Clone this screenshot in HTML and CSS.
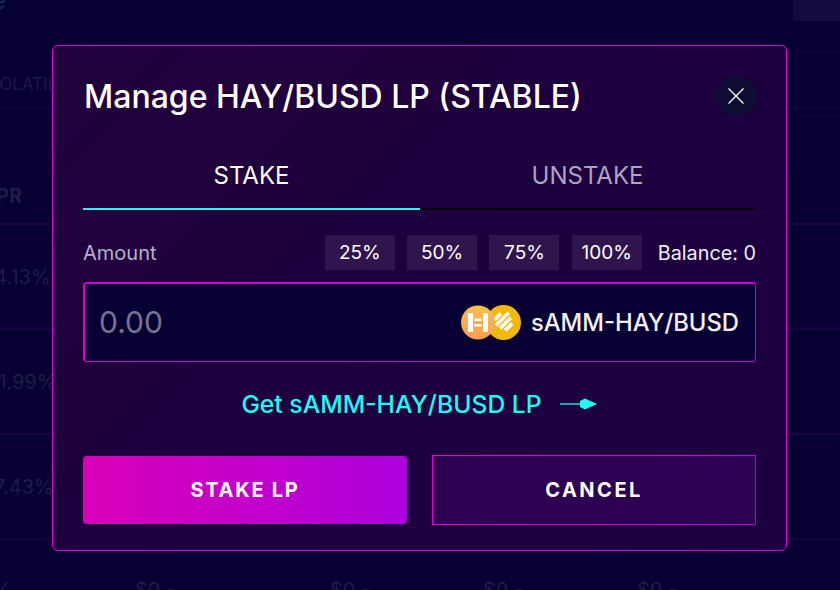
FILE: index.html
```html
<!DOCTYPE html>
<html lang="en">
<head>
<meta charset="utf-8">
<title>Manage HAY/BUSD LP</title>
<link rel="stylesheet" href="styles.css">
</head>
<body>
<div class="page">
  <header class="top"><span class="brand">e</span><span class="top-btn"></span></header>
  <div class="filters"><span class="filter-label">VOLATILE</span><span class="filter-box"></span></div>
  <div class="thead"><span class="th">APR</span></div>
  <div class="row"><span class="apr">14.13%</span></div>
  <div class="row"><span class="apr">21.99%</span></div>
  <div class="row"><span class="apr">17.43%</span></div>
  <div class="last"><span class="cell first-cell">%</span><span class="cell">$0 -</span><span class="cell">$0 -</span><span class="cell second">$0 -</span><span class="cell">$0 -</span></div>
</div>

<section class="modal">
  <div class="modal-head">
    <h2 class="title">Manage HAY/BUSD LP (STABLE)</h2>
    <button class="close" aria-label="Close">
      <svg width="16" height="16" viewBox="0 0 16 16"><path d="M0.5 0.5L15.5 15.5M15.5 0.5L0.5 15.5" stroke="#fff" stroke-width="1.3" fill="none"/></svg>
    </button>
  </div>
  <div class="tabs">
    <div class="tab active">STAKE</div>
    <div class="tab">UNSTAKE</div>
  </div>
  <div class="amount-row">
    <span class="amount-label">Amount</span>
    <div class="amount-tools">
      <span class="pct">25%</span>
      <span class="pct">50%</span>
      <span class="pct">75%</span>
      <span class="pct">100%</span>
      <span class="balance">Balance: 0</span>
    </div>
  </div>
  <div class="input-box">
    <span class="placeholder">0.00</span>
    <div class="token">
      <svg class="pair" width="60" height="35" viewBox="0 0 60 35">
        <defs>
          <linearGradient id="hay" x1="0" y1="0" x2="0" y2="1"><stop offset="0" stop-color="#f6bf4f"/><stop offset="1" stop-color="#ff9d50"/></linearGradient>
        </defs>
        <circle cx="42.500" cy="17.500" r="17.500" fill="#f0b90b"/>
        <g fill="#fff" transform="rotate(-45 42.500 17.500)">
          <rect x="38" y="7.500" width="9" height="3.600"/>
          <rect x="35" y="12.500" width="18" height="3.600"/>
          <rect x="36" y="17.500" width="15" height="3.600"/>
          <rect x="38" y="22.500" width="10" height="3.600"/>
        </g>
        <circle cx="17" cy="17.500" r="17" fill="url(#hay)"/>
        <g fill="#fff">
          <rect x="7" y="8" width="5" height="19"/>
          <rect x="22" y="8" width="5" height="19"/>
          <rect x="13.500" y="13.500" width="7" height="2.500"/>
          <rect x="13.500" y="19" width="7" height="2.500"/>
        </g>
      </svg>
      <span class="token-name">sAMM-HAY/BUSD</span>
    </div>
  </div>
  <a class="get-link" href="#">Get sAMM-HAY/BUSD LP
    <svg width="38" height="14" viewBox="0 0 38 14"><path d="M0 7H22" stroke="#1ffbf4" stroke-width="1.3"/><path d="M20 4L25 1.500L37 7L25 12.500L20 10Z" fill="#1ffbf4"/></svg>
  </a>
  <div class="actions">
    <button class="btn btn-primary">STAKE LP</button>
    <button class="btn btn-secondary">CANCEL</button>
  </div>
</section>
</body>
</html>
```
FILE: styles.css
```css
* { box-sizing: border-box; }
html, body { margin: 0; height: 100%; }
body {
  width: 840px;
  height: 590px;
  overflow: hidden;
  background: #060033;
  font-family: Inter, "Liberation Sans", sans-serif;
  color: #fff;
  position: relative;
}
.page { display: flex; flex-direction: column; height: 590px; overflow: hidden; }
.page > * { flex: none; }
.top { height: 52px; display: flex; justify-content: space-between; align-items: flex-start; }
.brand { font-size: 24px; line-height: 16px; margin-left: -8px; color: #0a3060; margin-top: -7px; }
.top-btn { width: 60px; height: 21px; margin-right: -13px; background: #140c3e; border-radius: 0 0 3px 3px; }
.filters { height: 57px; display: flex; justify-content: space-between; border-bottom: 1px solid #170049; align-items: flex-start; }
.filter-label { margin-left: -12px; margin-top: 22px; font-size: 17px; color: #1e1a48; }
.filter-box { width: 60px; height: 64px; margin-right: -15px; border: 1px solid #1c0345; }
.thead { height: 116px; border-bottom: 2px solid #1b0144; display: flex; align-items: flex-end; }
.th { font-size: 20px; font-weight: 700; color: #1f1c49; margin-left: -19px; margin-bottom: 15px; }
.row { height: 105px; border-bottom: 2px solid #1b0144; display: flex; align-items: center; }
.apr { font-size: 20px; color: #1f1c49; margin-left: -14px; }
.last { display: flex; padding-top: 38px; font-size: 20px; color: #1f1c49; }
.cell { width: 195px; }
.second { width: 154px; }
.first-cell { width: 143px; margin-left: -8px; }
.last .cell:nth-child(3) { width: 153px; }

.modal {
  position: absolute;
  left: 52px;
  top: 45px;
  width: 735px;
  height: 506px;
  padding: 30px 30px 0 30px;
  border: 1px solid #e000dc;
  border-radius: 6px;
  background: linear-gradient(135deg, #21003c, #1b0040);
}
.modal-head { display: flex; align-items: center; justify-content: space-between; height: 40px; }
.title { margin: 0 0 0 1px; font-size: 32px; line-height: 44px; font-weight: 500; position: relative; top: 1px; }
.close { width: 40px; height: 40px; border: 0; border-radius: 50%; background: #0e0e35; padding: 0; display: flex; align-items: center; justify-content: center; }
.tabs { display: grid; grid-template-columns: 337px 335px; margin-top: 42px; }
.tab { height: 52px; padding-top: 1px; text-align: center; font-size: 24px; line-height: 34px; color: #aea4c2; border-bottom: 2px solid #000; }
.tab.active { color: #fff; border-bottom-color: #1ffbf4; }
.amount-row { display: flex; justify-content: space-between; align-items: center; margin-top: 25px; height: 35px; }
.amount-label { font-size: 20px; color: #b9afcb; }
.amount-tools { display: flex; align-items: center; }
.pct { width: 70px; height: 35px; line-height: 35px; margin-right: 12.330px; text-align: center; font-size: 19px; background: #30154d; color: #fff; }
.pct:nth-child(4) { margin-right: 12px; }
.balance { font-size: 19.800px; margin-left: 4px; color: #f2edf7; }
.input-box {
  display: flex; align-items: center; justify-content: space-between;
  height: 80px; margin-top: 12px; padding: 0 16px 0 14px;
  border-style: solid; border-width: 2px 1px 1px 2px;
  border-color: #d000d6 #b800dc #d000d6 #e800c8;
  border-radius: 4px;
  background: #070033;
}
.placeholder { font-size: 30px; color: #77738c; position: relative; top: -1px; }
.token { display: flex; align-items: center; gap: 10px; }
.token-name { font-size: 23.800px; color: #f4f1f8; font-weight: 500; }
.get-link { display: flex; align-items: center; justify-content: center; gap: 18px; margin-top: 24px; height: 36px; font-size: 24.700px; font-weight: 500; color: #1ffbf4; text-decoration: none; }
.actions { display: grid; grid-template-columns: 324px 324px; gap: 25px; margin-top: 33px; align-items: center; }
.btn { font: 700 20px Inter, "Liberation Sans", sans-serif; letter-spacing: 1.750px; color: #fff; }
.btn-primary { height: 68px; border: 0; border-radius: 4px; background: linear-gradient(90deg, #da00b8, #ad00dd); }
.btn-secondary { height: 70px; letter-spacing: 2.500px; border: 1px solid; border-image: linear-gradient(90deg, #e800c8, #c000e0) 1; background: #2e0052; }
```
